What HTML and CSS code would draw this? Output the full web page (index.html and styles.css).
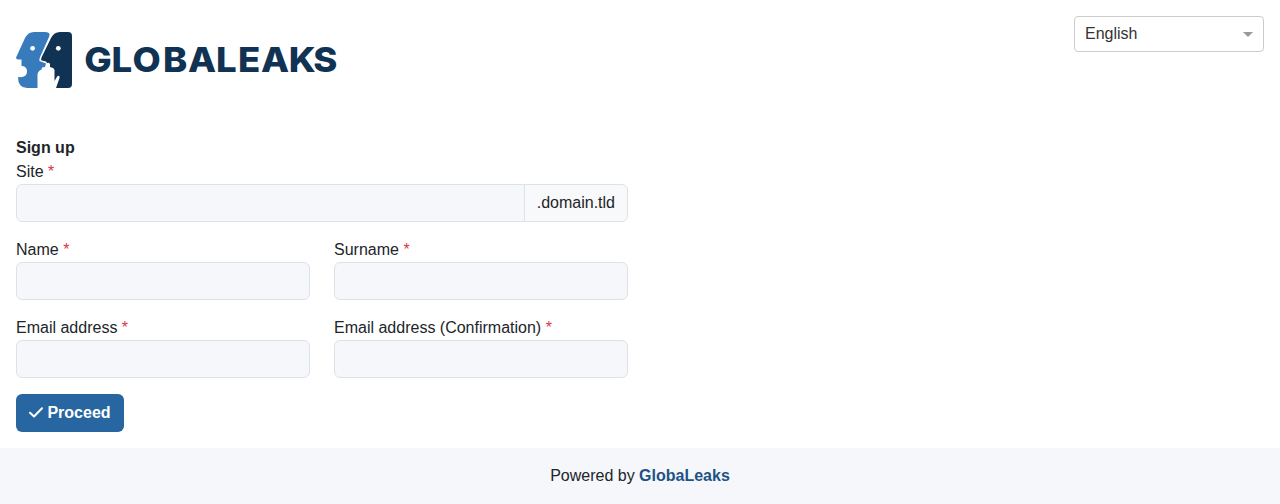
FILE: index.html
```html
<!DOCTYPE html>
<html lang="en">
<head>
<meta charset="utf-8">
<title>GlobaLeaks</title>
<link rel="stylesheet" href="styles.css">
</head>
<body>
<header class="header">
  <svg class="logo" width="322" height="56" viewBox="0 0 322 56" role="img" aria-label="GlobaLeaks">
    <path fill="#377bbc" d="M18 0H29Q35 0 33 5L24.500 24Q23 27 23.500 29L30 31.500L29 35L26 35.500L25.500 37.500Q21.500 39 21.500 43V56H11Q2 56 2 45Q11 46 11 39.500Q11 34 5.500 34V27.500H2Q-.5 27.500.3 25L9 6Q12 0 18 0Z"/>
    <path fill="#103253" d="M44 0H52Q56 0 56 4V52Q56 56 52 56H40L43.500 46Q44 43 41.500 44L38.500 49V38Q38 35.500 35.500 35.500L34 35V32Q33 30 31 31L30 29.500L26 28.500Q24.500 28 25.500 25.500L35 6Q38 0 44 0Z"/>
    <circle cx="16.600" cy="16.300" r="2.400" fill="#fff"/>
    <circle cx="42.300" cy="16.300" r="2.400" fill="#fff"/>
    <text class="wordmark" transform="scale(1.06 1)" y="40.500" x="64.300 90 109.900 138.700 162.200 188.800 209.400 231.200 257.300 280.500">GLOBALEAKS</text>
  </svg>
  <div class="language">English<span class="caret"></span></div>
</header>
<main class="content">
  <form class="signup">
    <div class="title">Sign up</div>
    <div class="field">
      <label for="site">Site <span class="required">*</span></label>
      <div class="group"><input id="site" class="input" type="text"><span class="suffix">.domain.tld</span></div>
    </div>
    <div class="row">
      <div class="field"><label for="name">Name <span class="required">*</span></label><input id="name" class="input" type="text"></div>
      <div class="field"><label for="surname">Surname <span class="required">*</span></label><input id="surname" class="input" type="text"></div>
    </div>
    <div class="row">
      <div class="field"><label for="email">Email address <span class="required">*</span></label><input id="email" class="input" type="email"></div>
      <div class="field"><label for="confirm">Email address (Confirmation) <span class="required">*</span></label><input id="confirm" class="input" type="email"></div>
    </div>
    <button class="proceed" type="button"><svg class="check" width="14" height="16" viewBox="0 0 14 16"><path d="M1 7.800L5 11.500L13 3.200" fill="none" stroke="#fff" stroke-width="2" stroke-linecap="round" stroke-linejoin="round"/></svg>Proceed</button>
  </form>
</main>
<footer class="footer">Powered by <a class="link">GlobaLeaks</a></footer>
</body>
</html>
```

FILE: styles.css
```css
* { box-sizing: border-box; }
body {
  margin: 0;
  min-height: 504px;
  display: flex;
  flex-direction: column;
  font: 16px/24px "Liberation Sans", Arial, sans-serif;
  color: #212529;
  background: #fff;
}
.header {
  display: flex;
  justify-content: space-between;
  align-items: flex-start;
  height: 136px;
  padding: 16px;
}
.logo { margin-top: 16px; overflow: visible; }
.wordmark {
  font-family: Inter, sans-serif;
  font-size: 34.500px;
  font-weight: 800;
  fill: #103253;
}
.language {
  display: flex;
  align-items: center;
  justify-content: space-between;
  width: 190px;
  height: 36px;
  padding: 0 10px;
  border: 1px solid #ccc;
  border-radius: 4px;
  color: #333;
}
.caret {
  border: 5px solid transparent;
  border-top-color: #999;
  border-bottom: 0;
}
.content { padding: 0 16px 16px; }
.signup { width: 612px; }
.title { font-weight: 700; }
.field { flex: 1; min-width: 0; margin-bottom: 16px; }
.field label { display: block; }
.required { color: #dc3545; }
.row { display: flex; gap: 24px; }
.group { display: flex; }
.input {
  display: block;
  width: 100%;
  height: 38px;
  padding: 6px 12px;
  border: 1px solid #dee2e6;
  border-radius: 6px;
  background: #f5f7fb;
  font: inherit;
}
.group .input { flex: 1; min-width: 0; border-radius: 6px 0 0 6px; }
.suffix {
  margin-left: -1px;
  padding: 6px 12px;
  height: 38px;
  border: 1px solid #dee2e6;
  border-radius: 0 6px 6px 0;
  background: #f8f9fa;
}
.proceed {
  display: flex;
  align-items: center;
  height: 38px;
  padding: 0 13px;
  border: 0;
  border-radius: 6px;
  background: #2866a2;
  color: #fff;
  font: inherit;
  font-weight: 700;
}
.check { margin-right: 4.450px; }
.footer {
  height: 56px;
  padding: 16px;
  background: #f5f7fb;
  text-align: center;
}
.link { color: #1d5286; font-weight: 700; }
```
